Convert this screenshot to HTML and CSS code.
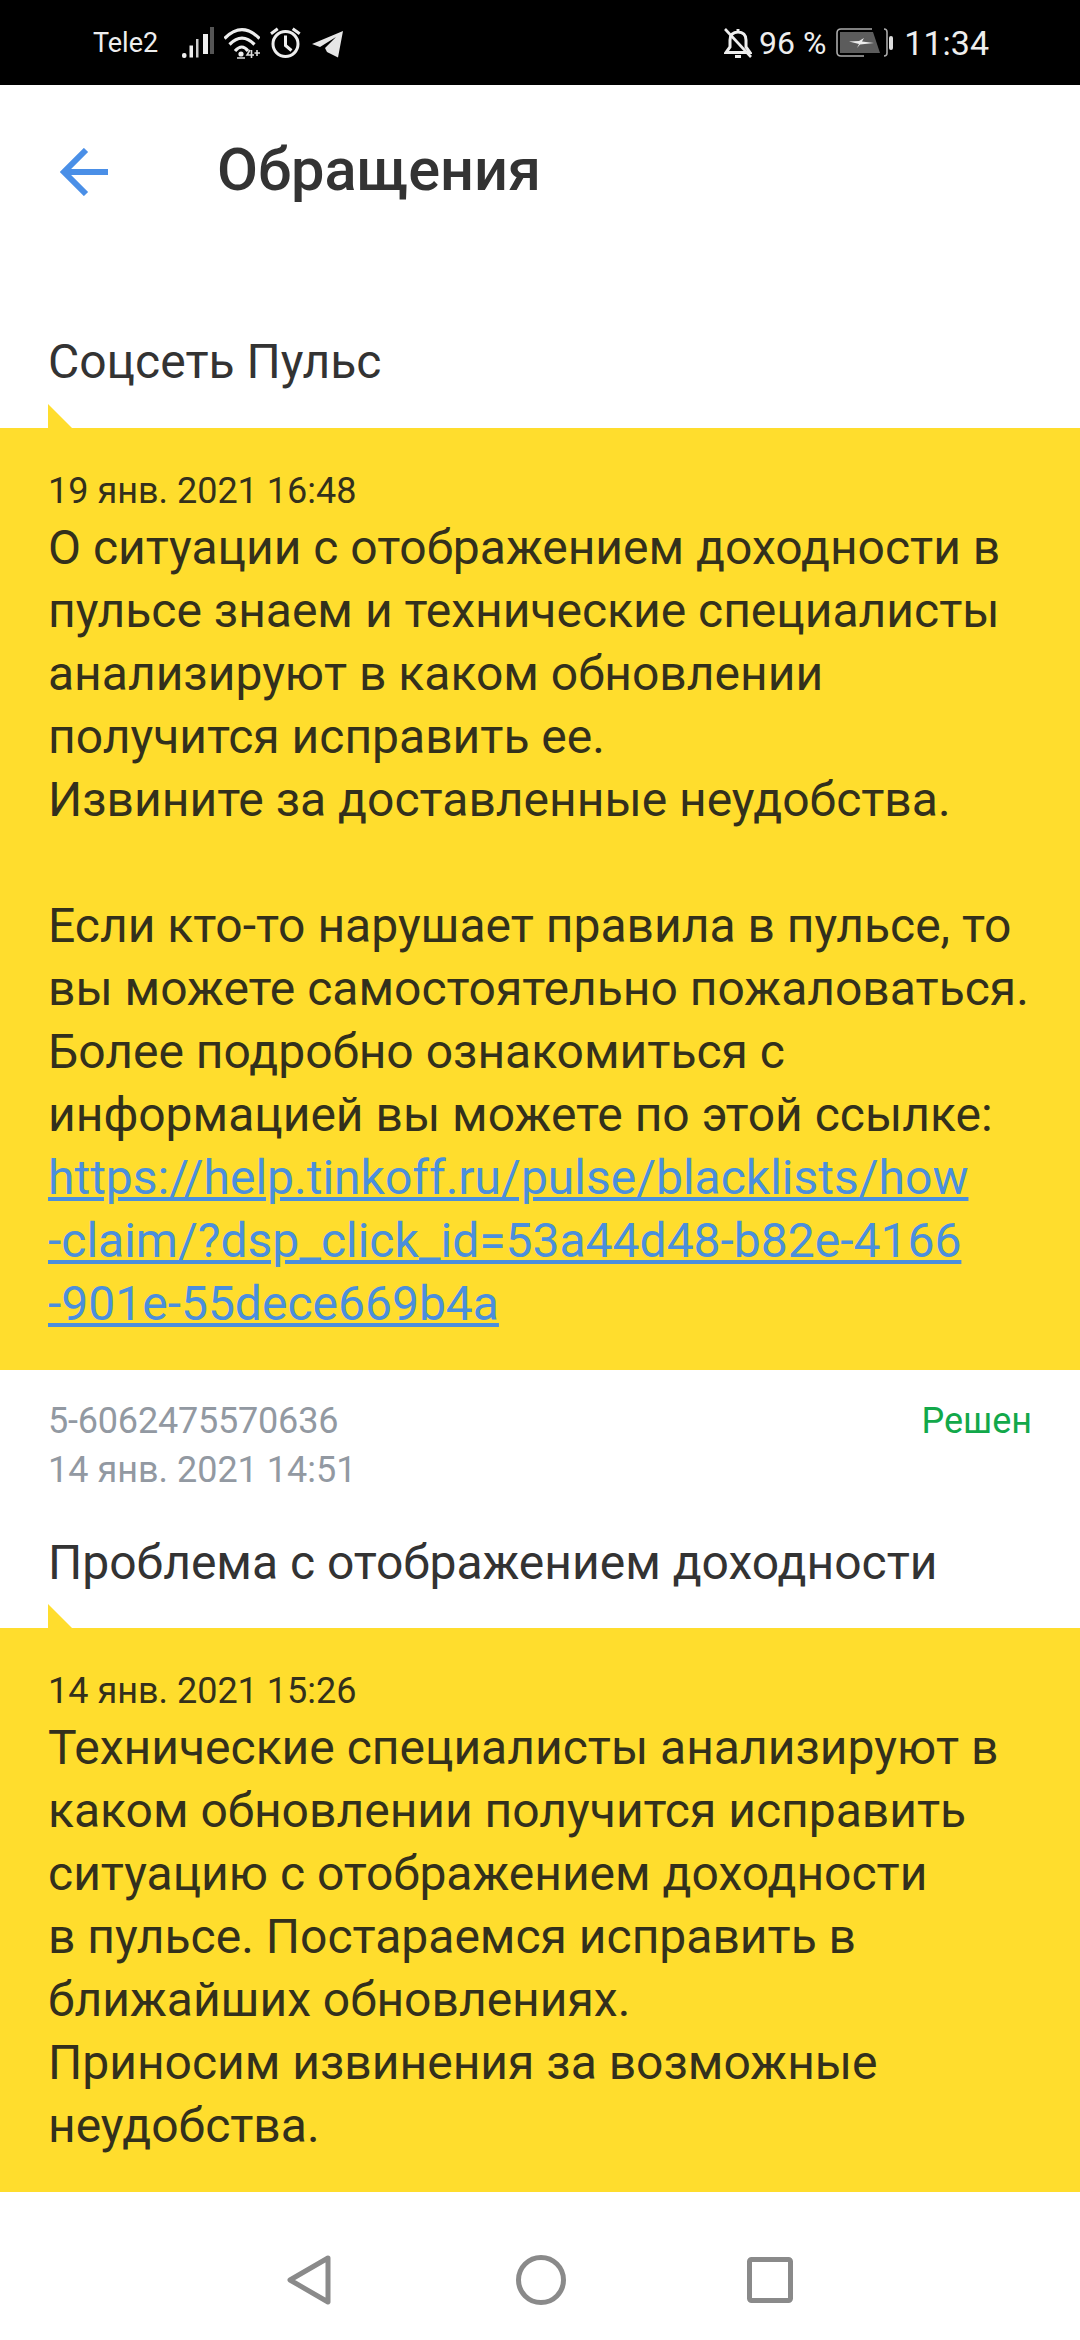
FILE: index.html
```html
<!DOCTYPE html>
<html lang="ru">
<head>
<meta charset="utf-8">
<title>Обращения</title>
<link rel="stylesheet" href="styles.css">
</head>
<body>
<div class="screen">
  <header class="status">
    <div class="status-left">
      <span class="carrier">Tele2</span>
      <svg class="ic-signal" viewBox="0 0 34 32" width="34" height="32"><rect x="1" y="26" width="4.5" height="5" rx="2" fill="#eee"/><rect x="8.5" y="18.5" width="3.5" height="12" fill="#eee"/><rect x="15" y="12" width="2.5" height="18.5" fill="#ccc"/><rect x="22" y="7" width="5" height="20" fill="#eee"/><rect x="29" y="0" width="4" height="27" fill="#555"/></svg>
      <svg class="ic-wifi" viewBox="0 0 36 32" width="36" height="32"><path d="M0.5 11.5Q18 -6 35.5 11.5M5.5 17.5Q18 5 30.5 17.5M11 24Q18 16 24 24" fill="none" stroke="#eee" stroke-width="3.2"/><circle cx="17" cy="27" r="2.6" fill="#eee"/><path d="M13 31h8M26 23l-3 5h7M27.5 23v8M30.5 26h5.5M33 23v6" stroke="#ddd" stroke-width="1.6" fill="none"/></svg>
      <svg class="ic-alarm" viewBox="0 0 32 32" width="32" height="32"><circle cx="15.5" cy="17" r="12.5" fill="none" stroke="#eee" stroke-width="3"/><path d="M15.5 8.5v10l6 5M1 6.8l6.7-5M22.7 1.8l7 5" fill="none" stroke="#eee" stroke-width="3"/></svg>
      <svg class="ic-plane" viewBox="0 0 32 30" width="32" height="30"><path d="M0 16L31 3L26 29.5L15 24L13 20L24 9L8 19Z" fill="#e6e6e6"/></svg>
    </div>
    <div class="status-right">
      <svg class="ic-bell" viewBox="0 0 28 30" width="28" height="30"><path d="M2 24.5h24l-4-5.500v-7c0-5-3-8-8-8s-8 3-8 8v7zM14 3.500V1M11 28.500h6" fill="none" stroke="#eee" stroke-width="3"/><path d="M1 1l26 28" stroke="#eee" stroke-width="2.600"/></svg>
      <span class="pct">96 %</span>
      <svg class="ic-batt" viewBox="0 0 58 30" width="58" height="30"><path d="M36 1H5Q1 1 1 5V24Q1 28 5 28H28M48 1Q51 1 51 4V25Q51 28 48 28" fill="none" stroke="#aaa" stroke-width="1.600"/><path d="M4 4H37L44 25H4Z" fill="#5c5c5c"/><path d="M13 13.500L23 13L28 10L26 13.500L38 15L24 16.500L21 20L23 16Z" fill="#eee"/><rect x="53" y="8" width="4" height="14" rx="2" fill="#ddd"/></svg>
      <span class="time">11:34</span>
    </div>
  </header>

  <nav class="appbar">
    <svg class="ic-back" viewBox="0 0 48 48" width="48" height="48"><path d="M49 24H4M26 2L4 24l22 22" fill="none" stroke="#4a8fe7" stroke-width="6"/></svg>
    <h1 class="title">Обращения</h1>
  </nav>

  <main class="content">
    <section class="ticket ticket-first">
      <h2 class="subject">Соцсеть Пульс</h2>
      <div class="bubble">
        <div class="msg-date">19 янв. 2021 16:48</div>
        <p class="msg-text">О ситуации с отображением доходности в<br>пульсе знаем и технические специалисты<br>анализируют в каком обновлении<br>получится исправить ее.<br>Извините за доставленные неудобства.<br><br>Если кто-то нарушает правила в пульсе, то<br>вы можете самостоятельно пожаловаться.<br>Более подробно ознакомиться с<br>информацией вы можете по этой ссылке:<br><a class="link" href="#">https://help.tinkoff.ru/pulse/blacklists/how<br>-claim/?dsp_click_id=53a44d48-b82e-4166<br>-901e-55dece669b4a</a></p>
      </div>
    </section>

    <section class="ticket">
      <div class="meta">
        <div class="meta-left">
          <div class="ticket-no">5-6062475570636</div>
          <div>14 янв. 2021 14:51</div>
        </div>
        <div class="state">Решен</div>
      </div>
      <h2 class="subject">Проблема с отображением доходности</h2>
      <div class="bubble">
        <div class="msg-date">14 янв. 2021 15:26</div>
        <p class="msg-text">Технические специалисты анализируют в<br>каком обновлении получится исправить<br>ситуацию с отображением доходности<br>в пульсе. Постараемся исправить в<br>ближайших обновлениях.<br>Приносим извинения за возможные<br>неудобства.</p>
      </div>
    </section>
  </main>

  <footer class="navbar">
    <svg class="nav-back" viewBox="0 0 44 50" width="44" height="50"><path d="M41 3L3 25l38 22z" fill="none" stroke="#8a8a8a" stroke-width="5" stroke-linejoin="round"/></svg>
    <svg class="nav-home" viewBox="0 0 50 50" width="50" height="50"><circle cx="25" cy="25" r="22.500" fill="none" stroke="#8a8a8a" stroke-width="5"/></svg>
    <svg class="nav-recent" viewBox="0 0 46 46" width="46" height="46"><rect x="2.500" y="2.500" width="41" height="41" rx="2" fill="none" stroke="#8a8a8a" stroke-width="5"/></svg>
  </footer>
</div>
</body>
</html>
```

FILE: styles.css
```css
* { box-sizing: border-box; }
html, body { margin: 0; padding: 0; }
body { background: #fff; font-family: Roboto, "Noto Sans", sans-serif; color: #333; }
.screen { width: 1080px; height: 2340px; display: flex; flex-direction: column; overflow: hidden; }

.status { height: 85px; background: #000; color: #eee; display: flex; justify-content: space-between; align-items: center; padding: 0 91px 0 93px; flex: none; }
.status-left, .status-right { display: flex; align-items: center; }
.carrier { font-size: 27px; margin-right: 23px; }
.ic-signal { margin-right: 9px; }
.ic-wifi { margin-right: 10px; }
.ic-alarm { margin-right: 10px; }
.ic-bell { margin-right: 7px; }
.pct { font-size: 32px; margin-right: 10px; }
.ic-batt { margin-right: 10px; }
.time { font-size: 34px; }

.appbar { height: 175px; display: flex; align-items: center; padding: 0 0 0 60px; flex: none; }
.ic-back { margin-right: 109px; margin-top: -2px; }
.title { margin: -5px 0 0; font-size: 59.5px; font-weight: 500; color: #333; }

.content { flex: 1; }
.ticket-first { padding-top: 72px; }
.subject { margin: 0; padding-left: 48px; font-size: 48px; font-weight: 400; line-height: 60px; color: #333; }
.bubble { position: relative; background: #ffdd2d; margin-top: 36px; padding: 40px 48px 35px; }
.bubble::before { content: ""; position: absolute; left: 48px; top: -24px; width: 24px; height: 24px; background: #ffdd2d; clip-path: polygon(0 0, 100% 100%, 0 100%); }
.msg-date { font-size: 36px; line-height: 46px; color: #33301c; }
.msg-text { margin: 2px 0 0; font-size: 48px; line-height: 63px; color: #33301c; white-space: nowrap; }
.link { color: #4b8fdc; text-decoration: underline; }

.meta { display: flex; justify-content: space-between; padding: 27px 48px 0; font-size: 36px; line-height: 49px; color: #9299a2; }
.ticket-no { letter-spacing: -0.2px; }
.state { color: #12a84a; }
.ticket .meta + .subject { margin-top: 38px; }
.meta + .subject + .bubble { margin-top: 35px; }

.navbar { height: 147px; padding-top: 27px; display: flex; align-items: center; justify-content: center; flex: none; }
.nav-back { margin-right: 185px; }
.nav-home { margin-right: 181px; }
```
